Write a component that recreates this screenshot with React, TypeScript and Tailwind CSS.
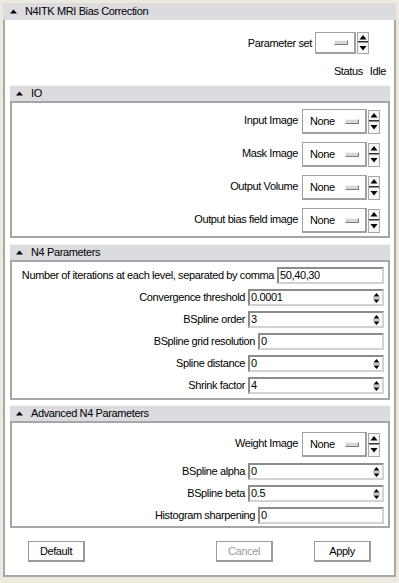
import React from "react";

const Tri = () => (
  <svg width="7" height="5" viewBox="0 0 7 5" className="shrink-0">
    <polygon points="3.5,0.5 7,4.5 0,4.5" fill="#000" />
  </svg>
);

const OptArrows = ({ h }: { h: number }) => (
  <svg width="12" height={h} viewBox={`0 0 12 ${h}`} className="shrink-0">
    <rect x="0.5" y="0.5" width="11" height={h - 1} fill="#f6f6f6" stroke="#a8a8a8" />
    <polygon points="6,3 9.5,7.5 2.5,7.5" fill="#000" />
    <rect x="1" y={h / 2 - 2} width="10" height="1.5" fill="#303030" />
    <polygon points={`2.5,${h / 2 + 3} 9.5,${h / 2 + 3} 6,${h / 2 + 7.5}`} fill="#000" />
  </svg>
);

const SpinArrows = () => (
  <svg width="7" height="12" viewBox="0 0 7 12" className="shrink-0">
    <polygon points="3.5,1 6.5,4.5 0.5,4.5" fill="#000" />
    <rect x="0" y="5.5" width="7" height="1" fill="#8a8a8a" />
    <polygon points="0.5,7.5 6.5,7.5 3.5,11" fill="#000" />
  </svg>
);

const Indicator = () => (
  <div className="w-[14px] h-[5px] bg-[#d6d6d6] border border-t-[#f4f4f4] border-l-[#f4f4f4] border-b-[#7a7a7a] border-r-[#7a7a7a]" />
);

const OptionMenu = ({ label }: { label: string }) => (
  <div className="flex items-center justify-end h-[25px]">
    <span className="mr-[4px] -mt-[2px]">{label}</span>
    <div className="w-[65px] h-[25px] bg-white border-t border-l border-r-2 border-b-2 border-[#a0a0a0] flex items-center pl-[7px]">
      <span className="mt-[1px]">None</span>
      <div className="ml-auto mr-[6px]">
        <Indicator />
      </div>
    </div>
    <div className="ml-[1px]">
      <OptArrows h={24} />
    </div>
  </div>
);

const Entry = ({
  label,
  value,
  w,
  spin,
}: {
  label: string;
  value: string;
  w: number;
  spin?: boolean;
}) => (
  <div className="flex items-center justify-end h-[17px] gap-[3px]">
    <span>{label}</span>
    <div
      className="h-[17px] bg-white border-2 border-t-[#8c8c8c] border-l-[#8c8c8c] border-b-[#d2d2d2] border-r-[#d2d2d2] flex items-center pl-[1px] pr-[2px]"
      style={{ width: w }}
    >
      <span className="leading-none">{value}</span>
      {spin && (
        <div className="ml-auto">
          <SpinArrows />
        </div>
      )}
    </div>
  </div>
);

const Header = ({ title }: { title: string }) => (
  <div className="h-[16px] bg-[#dcdbe0] border-t border-[#f2f1f4] flex items-center pl-[6px]">
    <Tri />
    <span className="ml-[8px]">{title}</span>
  </div>
);

const Button = ({ label, disabled }: { label: string; disabled?: boolean }) => (
  <div
    className={
      "w-[57px] h-[21px] bg-white border-t border-l border-r-2 border-b-2 border-[#9a9a9a] flex items-center justify-center " +
      (disabled ? "text-[#9c9c9c]" : "text-black")
    }
  >
    {label}
  </div>
);

export default function App() {
  return (
    <div className="w-[399px] h-[583px] bg-[#ece9df] pt-[3px] pl-[3px] overflow-hidden font-['Liberation_Sans',Arial,sans-serif] text-[11px] tracking-[-0.38px] text-black">
      <div className="w-[393px] h-[574px] flex flex-col">
        <div className="h-[17px] bg-[#dcdbe0] flex items-center pl-[7px] shrink-0">
          <Tri />
          <span className="ml-[8px]">N4ITK MRI Bias Correction</span>
        </div>
        <div className="flex-1 bg-white border-2 border-t-0 border-[#a8a8a8] flex flex-col">
          <div className="mt-[12px] flex items-center justify-end h-[22px] pr-[25px]">
            <span className="mr-[3px]">Parameter set</span>
            <div className="w-[41px] h-[22px] bg-white border-t border-l border-r-2 border-b-2 border-[#a0a0a0] flex items-center justify-end pr-[6px]">
              <Indicator />
            </div>
            <div className="ml-[1px]">
              <OptArrows h={22} />
            </div>
          </div>
          <div className="mt-[11px] h-[13px] flex items-center justify-end pr-[8px]">
            <span>Status</span>
            <span className="ml-[7px]">Idle</span>
          </div>

          <div className="mt-[7px] ml-[5px] w-[380px]">
            <Header title="IO" />
            <div className="h-[137px] border-2 border-[#a6a6a6] pt-[6px] pr-[8px] flex flex-col gap-[8px]">
              <OptionMenu label="Input Image" />
              <OptionMenu label="Mask Image" />
              <OptionMenu label="Output Volume" />
              <OptionMenu label="Output bias field image" />
            </div>
          </div>

          <div className="mt-[6px] ml-[5px] w-[380px]">
            <Header title="N4 Parameters" />
            <div className="h-[140px] border-2 border-[#a6a6a6] pt-[5px] pr-[4px] flex flex-col gap-[5px]">
              <Entry label="Number of iterations at each level, separated by comma" value="50,40,30" w={107} />
              <Entry label="Convergence threshold" value="0.0001" w={136} spin />
              <Entry label="BSpline order" value="3" w={136} spin />
              <Entry label="BSpline grid resolution" value="0" w={126} />
              <Entry label="Spline distance" value="0" w={136} spin />
              <Entry label="Shrink factor" value="4" w={136} spin />
            </div>
          </div>

          <div className="mt-[5px] ml-[5px] w-[380px]">
            <Header title="Advanced N4 Parameters" />
            <div className="h-[107px] border-2 border-[#a6a6a6] pt-[9px] flex flex-col">
              <div className="pr-[8px]">
                <OptionMenu label="Weight Image" />
              </div>
              <div className="mt-[6px] pr-[4px] flex flex-col gap-[5px]">
                <Entry label="BSpline alpha" value="0" w={136} spin />
                <Entry label="BSpline beta" value="0.5" w={136} spin />
                <Entry label="Histogram sharpening" value="0" w={126} />
              </div>
            </div>
          </div>

          <div className="mt-[13px] flex items-center">
            <div className="ml-[23px]">
              <Button label="Default" />
            </div>
            <div className="ml-[131px]">
              <Button label="Cancel" disabled />
            </div>
            <div className="ml-[41px]">
              <Button label="Apply" />
            </div>
          </div>
        </div>
      </div>
    </div>
  );
}
